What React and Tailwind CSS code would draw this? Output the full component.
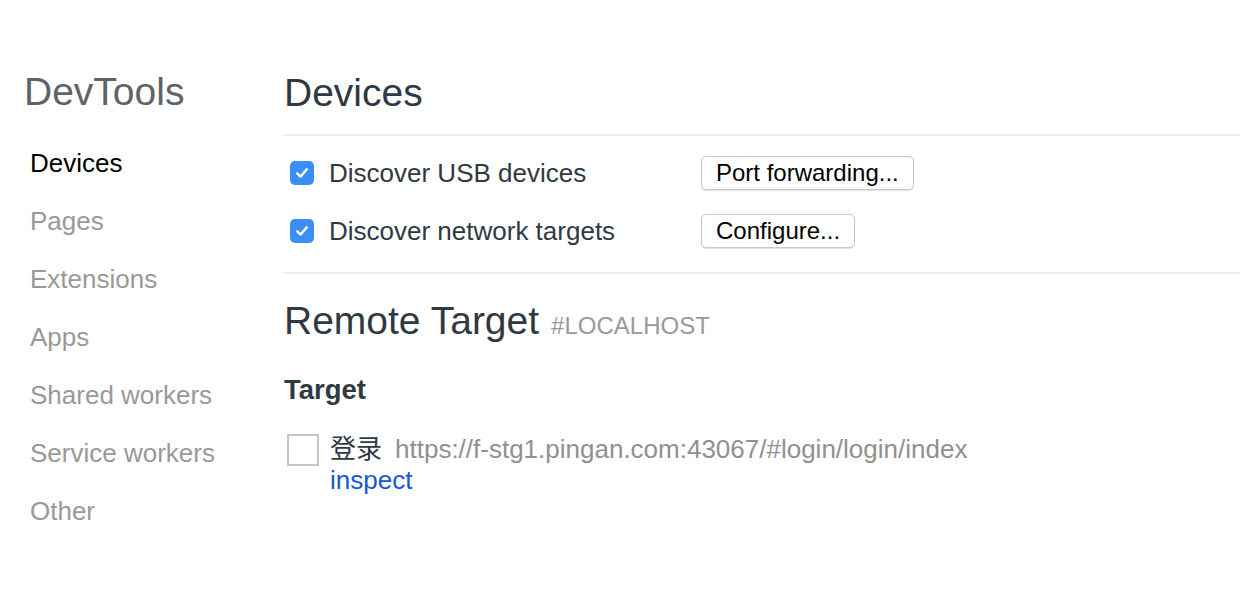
import React from "react";

const F = { fontFamily: '"Liberation Sans", Arial, "Noto Sans CJK SC", sans-serif' };

function Checked() {
  return (
    <div className="w-[24px] h-[24px] rounded-[5px] bg-[#3b8ef5] flex items-center justify-center shrink-0">
      <svg width="16" height="16" viewBox="0 0 16 16" fill="none">
        <path d="M3.2 8.4 L6.5 11.6 L12.8 4.2" stroke="white" strokeWidth="2.4" strokeLinecap="round" strokeLinejoin="round" />
      </svg>
    </div>
  );
}

function Row({ label, button }) {
  return (
    <div className="h-[58px] flex items-center pl-[6px]">
      <Checked />
      <div className="ml-[15px] w-[372px] text-[26px] text-[#303942]">{label}</div>
      <div className="h-[34px] px-[14px] flex items-center rounded-[5px] border border-[#c8c8c8] bg-white shadow-[0_1px_1px_rgba(0,0,0,0.12)] text-[24px] text-black leading-none">
        {button}
      </div>
    </div>
  );
}

export default function App() {
  const items = ["Devices", "Pages", "Extensions", "Apps", "Shared workers", "Service workers", "Other"];
  return (
    <div style={F} className="w-[1240px] h-[596px] bg-white flex overflow-hidden">
      <div className="w-[284px] shrink-0 pl-[24px] pt-[70px]">
        <div className="text-[39px] leading-[44px] text-[#5f6368]">DevTools</div>
        <div className="mt-[20px]">
          {items.map((t, i) => (
            <div
              key={t}
              className={
                "h-[58px] flex items-center pl-[6px] text-[26px] " +
                (i === 0 ? "text-black" : "text-[#999999]")
              }
            >
              {t}
            </div>
          ))}
        </div>
      </div>
      <div className="flex-1 pt-[71px]">
        <div className="text-[39px] leading-[44px] text-[#303942]">Devices</div>
        <div className="mt-[19px] h-[2px] bg-[#ededed]" />
        <div className="pt-[8px] pb-[12px]">
          <Row label="Discover USB devices" button="Port forwarding..." />
          <Row label="Discover network targets" button="Configure..." />
        </div>
        <div className="h-[2px] bg-[#ededed]" />
        <div className="mt-[25px] flex items-baseline">
          <span className="text-[39px] leading-[44px] text-[#303942]">Remote Target</span>
          <span className="ml-[12px] text-[24px] text-[#999999]">#LOCALHOST</span>
        </div>
        <div className="mt-[30px] text-[27.5px] leading-[32px] font-bold text-[#303942]">Target</div>
        <div className="mt-[28px] flex">
          <div className="ml-[3px] w-[32px] h-[32px] border-2 border-[#c6c6c6] shrink-0" />
          <div className="ml-[11px] text-[26px] leading-[31px]">
            <div>
              <span className="text-[#303942]">登录</span>
              <span className="ml-[13px] text-[#909090]">https://f-stg1.pingan.com:43067/#login/login/index</span>
            </div>
            <div className="text-[#1558d6]">inspect</div>
          </div>
        </div>
      </div>
    </div>
  );
}
